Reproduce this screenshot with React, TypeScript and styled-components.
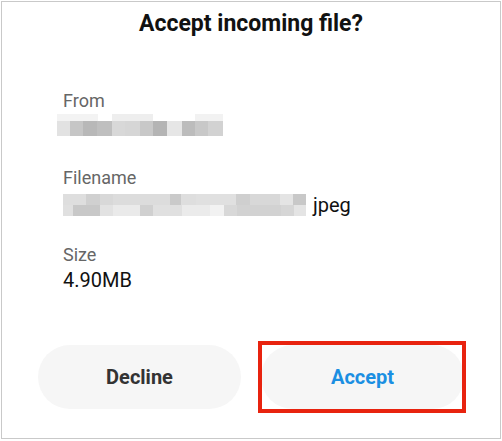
import React from "react";
import styled, { createGlobalStyle } from "styled-components";

const Global = createGlobalStyle`
  html, body { margin: 0; padding: 0; background: #ffffff; }
  body { font-family: Roboto, "Noto Sans", "Liberation Sans", sans-serif; }
`;

const Frame = styled.div`
  box-sizing: border-box;
  margin: 1px 0 0 1px;
  width: 500px;
  height: 438px;
  border: 1px solid #c9c9c9;
  background: #ffffff;
  display: flex;
  flex-direction: column;
`;

const Title = styled.h1`
  margin: 8px 0 0;
  font-size: 23px;
  line-height: 28px;
  font-weight: 700;
  color: #111111;
  text-align: center;
`;

const Info = styled.div`
  display: flex;
  flex-direction: column;
  padding-left: 61px;
  margin-top: 53px;
`;

const Label = styled.div<{ $top?: number }>`
  font-size: 18px;
  line-height: 20px;
  color: #666666;
  margin-top: ${(p) => p.$top ?? 0}px;
`;

const ValueRow = styled.div<{ $top?: number; $shift?: number }>`
  display: flex;
  align-items: center;
  margin-top: ${(p) => p.$top ?? 0}px;
  margin-left: ${(p) => p.$shift ?? 0}px;
`;

const Value = styled.span`
  font-size: 20px;
  line-height: 22px;
  color: #111111;
  margin-left: 7px;
`;

const SizeValue = styled.div`
  font-size: 20px;
  line-height: 24px;
  color: #111111;
  margin-top: 3px;
`;

const Buttons = styled.div`
  display: flex;
  gap: 20px;
  padding: 0 36px;
  margin-top: 53px;
`;

const Pill = styled.button<{ $accent?: boolean }>`
  flex: 1;
  height: 64px;
  border: none;
  border-radius: 32px;
  background: #f6f6f6;
  font-family: Roboto, "Noto Sans", "Liberation Sans", sans-serif;
  font-size: 20px;
  font-weight: 700;
  color: ${(p) => (p.$accent ? "#1b8fe2" : "#333333")};
  padding: 0;
  position: relative;
`;

const Highlight = styled.span`
  position: absolute;
  top: -4px;
  bottom: -4px;
  left: -3px;
  right: -2px;
  border: 4px solid #e8230f;
  box-sizing: border-box;
  pointer-events: none;
`;

type Cell = [number, string];

const Mosaic: React.FC<{ rows: { h: number; cells: Cell[] }[]; width: number }> = ({ rows, width }) => {
  const height = rows.reduce((a, r) => a + r.h, 0);
  let y = 0;
  return (
    <svg width={width} height={height} style={{ display: "block", flex: "none" }}>
      {rows.map((r, ri) => {
        let x = 0;
        const top = y;
        y += r.h;
        return r.cells.map(([w, c], ci) => {
          const rx = x;
          x += w;
          return <rect key={`${ri}-${ci}`} x={rx} y={top} width={w} height={r.h} fill={c} />;
        });
      })}
    </svg>
  );
};

const fromRows = [
  {
    h: 7,
    cells: [
      [41, "#f3f3f3"],
      [14, "#ffffff"],
      [41, "#eeeeee"],
      [42, "#ffffff"],
      [28, "#f2f2f2"],
    ] as Cell[],
  },
  {
    h: 15,
    cells: [
      [13, "#e2e2e2"],
      [13, "#c6c6c6"],
      [14, "#b8b8b8"],
      [15, "#bfbfbf"],
      [13, "#d8d8d8"],
      [15, "#d6d6d6"],
      [13, "#c8c8c8"],
      [14, "#b4b4b4"],
      [15, "#e6e6e6"],
      [13, "#bcbcbc"],
      [13, "#c8c8c8"],
      [15, "#d2d2d2"],
    ] as Cell[],
  },
];

const fileRows = [
  {
    h: 11,
    cells: [
      [23, "#dedede"],
      [14, "#d0d0d0"],
      [13, "#d8d8d8"],
      [57, "#dcdcdc"],
      [11, "#cacaca"],
      [15, "#dedede"],
      [40, "#e0e0e0"],
      [14, "#cfcfcf"],
      [30, "#d8d8d8"],
      [13, "#e4e4e4"],
      [13, "#c8c8c8"],
    ] as Cell[],
  },
  {
    h: 11,
    cells: [
      [10, "#e0e0e0"],
      [27, "#c8c8c8"],
      [13, "#e2e2e2"],
      [27, "#eaeaea"],
      [13, "#d0d0d0"],
      [29, "#e0e0e0"],
      [28, "#ebebeb"],
      [14, "#f2f2f2"],
      [13, "#d8d8d8"],
      [44, "#d2d2d2"],
      [13, "#d6d6d6"],
      [12, "#e4e4e4"],
    ] as Cell[],
  },
];

export default function App() {
  return (
    <>
      <Global />
      <Frame>
        <Title>Accept incoming file?</Title>
        <Info>
          <Label>From</Label>
          <ValueRow $top={3} $shift={-6}>
            <Mosaic rows={fromRows} width={166} />
          </ValueRow>
          <Label $top={32}>Filename</Label>
          <ValueRow $top={6}>
            <Mosaic rows={fileRows} width={243} />
            <Value>jpeg</Value>
          </ValueRow>
          <Label $top={29}>Size</Label>
          <SizeValue>4.90MB</SizeValue>
        </Info>
        <Buttons>
          <Pill>Decline</Pill>
          <Pill $accent>
            Accept
            <Highlight />
          </Pill>
        </Buttons>
      </Frame>
    </>
  );
}
